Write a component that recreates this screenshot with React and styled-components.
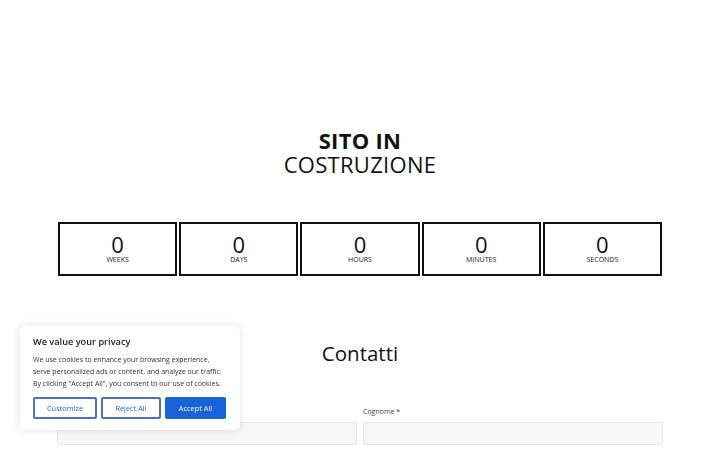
import React from "react";
import styled, { createGlobalStyle } from "styled-components";

const Global = createGlobalStyle`
  html, body { margin: 0; padding: 0; background: #fff; }
  body { font-family: "Open Sans", "Noto Sans", sans-serif; color: #111; overflow: hidden; }
  * { box-sizing: border-box; }
`;

const Page = styled.main`
  width: 604px;
  margin: 0 auto;
  padding-top: 128px;
  display: flex;
  flex-direction: column;
  align-items: stretch;
`;

const Title = styled.h1`
  margin: 0;
  text-align: center;
  font-size: 22px;
  line-height: 24px;
  font-weight: 400;
  letter-spacing: 0.3px;
  color: #111;
`;

const TitleBold = styled.span`
  display: block;
  font-weight: 700;
`;

const Countdown = styled.div`
  margin-top: 46px;
  display: grid;
  grid-template-columns: repeat(5, 1fr);
  gap: 2px;
`;

const Unit = styled.div`
  height: 54px;
  border: 2px solid #111;
  padding-top: 9px;
  display: flex;
  flex-direction: column;
  align-items: center;
`;

const Num = styled.div`
  font-size: 22px;
  line-height: 22px;
  color: #111;
`;

const UnitLabel = styled.div`
  font-size: 7px;
  line-height: 9px;
  text-transform: uppercase;
  color: #222;
`;

const Heading = styled.h2`
  margin: 63px 0 0;
  text-align: center;
  font-size: 20.5px;
  line-height: 28px;
  font-weight: 400;
  color: #111;
`;

const Form = styled.form`
  margin-top: 40px;
  display: grid;
  grid-template-columns: 1fr 1fr;
  column-gap: 6px;
  margin-left: -1px;
  margin-right: -1px;
`;

const Field = styled.div`
  display: flex;
  flex-direction: column;
  gap: 5px;
`;

const Label = styled.label`
  font-size: 7px;
  line-height: 10px;
  color: #444;
`;

const Input = styled.input`
  height: 23px;
  width: 100%;
  background: #f7f7f7;
  border: 1px solid #e6e6e6;
  border-radius: 2px;
  font-family: inherit;
`;

const Banner = styled.div`
  position: fixed;
  left: 20px;
  bottom: 20px;
  width: 220px;
  background: #fff;
  border-radius: 5px;
  box-shadow: 0 0 8px rgba(0, 0, 0, 0.12);
  padding: 9px 12px 11px 13px;
`;

const BannerTitle = styled.div`
  font-size: 9.2px;
  line-height: 14px;
  font-weight: 600;
  color: #212121;
`;

const BannerText = styled.p`
  margin: 5px 0 0;
  font-size: 7px;
  line-height: 12px;
  color: #333;
`;

const Buttons = styled.div`
  margin-top: 7px;
  display: flex;
  gap: 4px;
`;

const Btn = styled.button`
  height: 22px;
  padding: 0;
  width: ${(p) => p.$w}px;
  font-family: inherit;
  font-size: 7.4px;
  border: 2px solid ${(p) => (p.$primary ? "#1863dc" : "#4a74b4")};
  background: ${(p) => (p.$primary ? "#1863dc" : "#fff")};
  color: ${(p) => (p.$primary ? "#fff" : "#1863dc")};
  border-radius: 2px;
`;

const units = ["Weeks", "Days", "Hours", "Minutes", "Seconds"];

export default function App() {
  return (
    <>
      <Global />
      <Page>
        <Title>
          <TitleBold>SITO IN</TitleBold>
          COSTRUZIONE
        </Title>
        <Countdown>
          {units.map((u) => (
            <Unit key={u}>
              <Num>0</Num>
              <UnitLabel>{u}</UnitLabel>
            </Unit>
          ))}
        </Countdown>
        <Heading>Contatti</Heading>
        <Form>
          <Field>
            <Label>Nome *</Label>
            <Input />
          </Field>
          <Field>
            <Label>Cognome *</Label>
            <Input />
          </Field>
        </Form>
      </Page>
      <Banner>
        <BannerTitle>We value your privacy</BannerTitle>
        <BannerText>
          We use cookies to enhance your browsing experience,
          <br />
          serve personalized ads or content, and analyze our traffic.
          <br />
          By clicking "Accept All", you consent to our use of cookies.
        </BannerText>
        <Buttons>
          <Btn $w={64}>Customize</Btn>
          <Btn $w={60}>Reject All</Btn>
          <Btn $w={61} $primary>
            Accept All
          </Btn>
        </Buttons>
      </Banner>
    </>
  );
}
